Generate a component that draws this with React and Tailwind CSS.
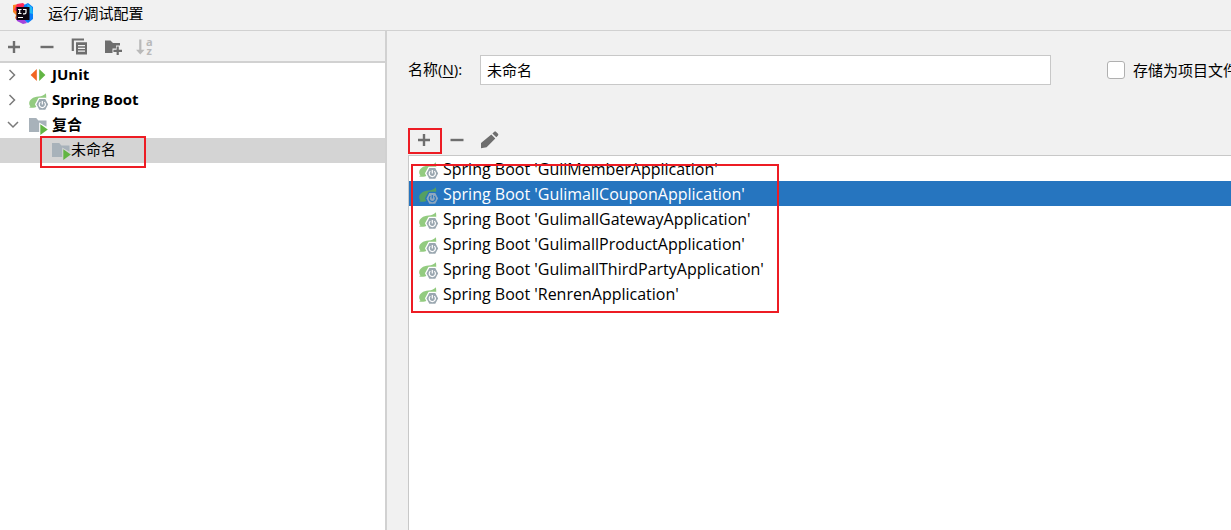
import React, { useState } from "react";

function Svg({ children, className = "" }) {
  return (
    <svg viewBox="0 0 20 20" className={`size-5 shrink-0 overflow-visible ${className}`} aria-hidden="true">
      {children}
    </svg>
  );
}

const AddIcon = () => (
  <Svg>
    <path fill="#6e6e6e" d="M8.800 4h2.400v4.800H16v2.400h-4.800V16H8.800v-4.800H4V8.800h4.800z" />
  </Svg>
);

const RemoveIcon = () => (
  <Svg>
    <path fill="#6e6e6e" d="M3.500 8.800h13v2.400h-13z" />
  </Svg>
);

const CopyIcon = () => (
  <Svg>
    <path fill="#6e6e6e" d="M1.700 1.500h12.300v2H3.900v10.500H1.700z" />
    <path
      fill="#6e6e6e"
      fillRule="evenodd"
      d="M6 5.200h11v12.300H6zM8 8v1.200h7V8zm0 2.800V12h7v-1.200zm0 2.800v1.200h7v-1.200z"
    />
  </Svg>
);

const NewFolderIcon = () => (
  <Svg>
    <path fill="#6e6e6e" d="M2 3.500h5.500L10 6h7v2.500h-4v3H9.500V16H2z" />
    <path fill="#6e6e6e" d="M13.600 9.500h2.200v3.200H19v2.200h-3.200v3.200h-2.200v-3.200h-3.200v-2.200h3.200z" />
  </Svg>
);

const SortIcon = () => (
  <Svg>
    <path fill="#b9b9b9" d="M3.200 2.500h2.200v10.300h3.200L4.300 17.600 0 12.800h3.200z" />
    <text x="10" y="9" fontSize="11" fontWeight="700" fill="#b9b9b9" fontFamily="Open Sans, sans-serif">a</text>
    <text x="10.500" y="17.500" fontSize="11" fontWeight="700" fill="#b9b9b9" fontFamily="Open Sans, sans-serif">z</text>
  </Svg>
);

const EditIcon = () => (
  <Svg>
    <path fill="#6e6e6e" d="M11.300 4.600l4 4-8.700 8.700L1 18.300v-5.200zM12.400 3.500l1.900-1.800q.8-.7 1.600 0l2.100 2.100q.7.8 0 1.600l-1.700 1.900z" />
  </Svg>
);

const JUnitIcon = () => (
  <Svg>
    <path fill="#f26522" d="M8.800 4v12L2.600 10z" />
    <path fill="#62b543" d="M11.200 4v12l6.200-6z" />
  </Svg>
);

function SpringIcon({ selected = false }) {
  const gap = selected ? "#2675bf" : "#ffffff";
  const gear = selected ? "#8fa8bf" : "#9aa7b0";
  return (
    <Svg>
      <path
        fill={selected ? "#54a062" : "#93cb80"}
        d="M17.800 3.200C16.300 5.300 13.800 6.200 10.500 6.400 5 6.800 1.200 9.500 1.200 13.200c0 1.300.5 2.400 1.300 3.100-.6.300-1 .7-1.300 1.200 3.200.5 6 .1 8.300-1.300 4-.500 7.500-2.700 8.400-6.200.5-2.200.5-4.500-.1-6.800z"
      />
      <path
        fill={gear}
        stroke={gap}
        strokeWidth="1.300"
        strokeLinejoin="round"
        d="M11 8.300h6.600l3.300 6.100-3.300 6.100H11l-3.300-6.100z"
      />
      <path
        fill="none"
        stroke={gap}
        strokeWidth="1.200"
        d="M14.300 11v3.500M12.300 12.100a3.100 3.100 0 1 0 4 0"
      />
    </Svg>
  );
}

const CompoundIcon = () => (
  <Svg>
    <path fill="#a8b2ba" d="M1 3h7.200l2.200 2.500H18.500v6.300L11.200 7.500V17H1z" />
    <path fill="#62b543" d="M12.300 9.300l7.500 5.300-7.500 5.400z" />
  </Svg>
);

function Chevron({ open = false }) {
  return (
    <svg viewBox="0 0 12 12" className="size-3 shrink-0" aria-hidden="true">
      <path
        d={open ? "M1 3l5 5 5-5" : "M2.500 1l5 5-5 5"}
        fill="none"
        stroke="#7a7a7a"
        strokeWidth="1.500"
      />
    </svg>
  );
}

function AppLogo() {
  return (
    <svg viewBox="0 0 22 22" className="size-[22px] shrink-0" aria-hidden="true">
      <path fill="#fd8224" d="M1 3l6-1 4 4v10l-5 3-3-3 1-3-3-3z" />
      <path fill="#fe2857" d="M5 2l6-1 4 4-5 7-8-4z" />
      <path fill="#087cfa" d="M12 3l4-2 5 4v12l-5 4-6-4z" />
      <path fill="#21b9f5" d="M15 2l5 3 1 7-4-1z" />
      <path fill="#a443dc" d="M4 15l8 2 3 4-4 1-6-3z" />
      <path fill="#0d0510" d="M4.500 5h13v13h-13z" />
      <path fill="none" stroke="#fff" strokeWidth="1.200" d="M6 7.500h3.500M7.700 7.500v4M6 11.500h3.500M11 7.500h3v3q0 1.300-1.500 1.300H11" />
      <path fill="#fff" d="M6 15h5v1H6z" />
    </svg>
  );
}

function ToolButton({ label, disabled, children }) {
  return (
    <button type="button" aria-label={label} disabled={disabled} className="flex size-5 shrink-0 items-center justify-center">
      {children}
    </button>
  );
}

const Mark = ({ className }) => (
  <span aria-hidden="true" className={`pointer-events-none absolute z-10 border-2 border-[#ed1c24] ${className}`} />
);

const configurations = [
  "GuliMemberApplication",
  "GulimallCouponApplication",
  "GulimallGatewayApplication",
  "GulimallProductApplication",
  "GulimallThirdPartyApplication",
  "RenrenApplication",
];

function TreeGroup({ name, icon, open }) {
  return (
    <button type="button" aria-expanded={!!open} className="flex h-[25px] w-full items-center pb-0.5 pl-[7px] text-left font-bold">
      <Chevron open={open} />
      <span className="ml-[9px] mr-1 flex">{icon}</span>
      <span className="pb-0.5">{name}</span>
    </button>
  );
}

export default function App() {
  const [name, setName] = useState("未命名");
  const [selected, setSelected] = useState(1);

  return (
    <div className="flex h-screen flex-col overflow-hidden bg-[#f1f1f1] font-['Open_Sans','Noto_Sans_CJK_SC',sans-serif] text-[15px] leading-5 text-black">
      <header className="flex h-[31px] shrink-0 items-center gap-3.5 border-b border-[#d1d1d1] pb-1 pl-3">
        <AppLogo />
        <h1>运行/调试配置</h1>
      </header>

      <div className="flex min-h-0 flex-1">
        <aside className="flex w-[387px] shrink-0 flex-col border-r-2 border-[#d1d1d1]">
          <div className="flex h-8 shrink-0 items-center gap-[13px] border-b-2 border-[#d1d1d1] pl-1 pt-0.5">
            <ToolButton label="添加"><AddIcon /></ToolButton>
            <ToolButton label="移除"><RemoveIcon /></ToolButton>
            <ToolButton label="复制"><CopyIcon /></ToolButton>
            <ToolButton label="新建文件夹"><NewFolderIcon /></ToolButton>
            <ToolButton label="排序" disabled><SortIcon /></ToolButton>
          </div>
          <nav className="flex-1 bg-white">
            <TreeGroup name="JUnit" icon={<JUnitIcon />} />
            <TreeGroup name="Spring Boot" icon={<SpringIcon />} />
            <TreeGroup name="复合" icon={<CompoundIcon />} open />
            <button type="button" className="relative flex h-[25px] w-full items-center bg-[#d4d4d4] pb-0.5 pl-[51px] text-left">
              <CompoundIcon />
              <span className="pb-0.5">{name}</span>
              <Mark className="-top-0.5 left-10 h-8 w-[106px]" />
            </button>
          </nav>
        </aside>

        <main className="flex min-w-0 flex-1 flex-col overflow-hidden pl-[21px] pt-6">
          <div className="flex shrink-0 items-center">
            <label htmlFor="config-name" className="w-[72px] shrink-0 pb-0.5">
              名称(<u className="underline-offset-2">N</u>):
            </label>
            <input
              id="config-name"
              value={name}
              onChange={(e) => setName(e.target.value)}
              className="h-[30px] w-[571px] shrink-0 border border-[#c8c8c8] bg-white px-1.5 pb-0.5 outline-none"
            />
            <label className="ml-14 flex shrink-0 items-center gap-2 whitespace-nowrap">
              <input type="checkbox" className="size-[18px] appearance-none rounded-[3px] border border-[#b0b0b0] bg-white checked:bg-[#2675bf]" />
              存储为项目文件
            </label>
          </div>

          <div className="relative mt-[42px] flex h-7 shrink-0 items-center gap-[13px] pb-0.5 pl-1.5">
            <ToolButton label="添加配置"><AddIcon /></ToolButton>
            <ToolButton label="移除配置"><RemoveIcon /></ToolButton>
            <ToolButton label="编辑配置"><EditIcon /></ToolButton>
            <Mark className="left-0 top-px h-[26px] w-[34px]" />
          </div>

          <div className="relative flex-1 border-l border-t border-[#c8c8c8] bg-white">
            <ul className="text-base leading-5">
              {configurations.map((item, i) => (
                <li key={item}>
                  <button
                    type="button"
                    onClick={() => setSelected(i)}
                    className={`flex h-[25px] w-full items-center gap-[5px] whitespace-nowrap pl-[9px] text-left ${
                      i === selected ? "bg-[#2675bf] text-white" : ""
                    }`}
                  >
                    <SpringIcon selected={i === selected} />
                    <span>Spring Boot '{item}'</span>
                  </button>
                </li>
              ))}
            </ul>
            <Mark className="left-0.5 top-2 h-[149px] w-[368px]" />
          </div>
        </main>
      </div>
    </div>
  );
}
